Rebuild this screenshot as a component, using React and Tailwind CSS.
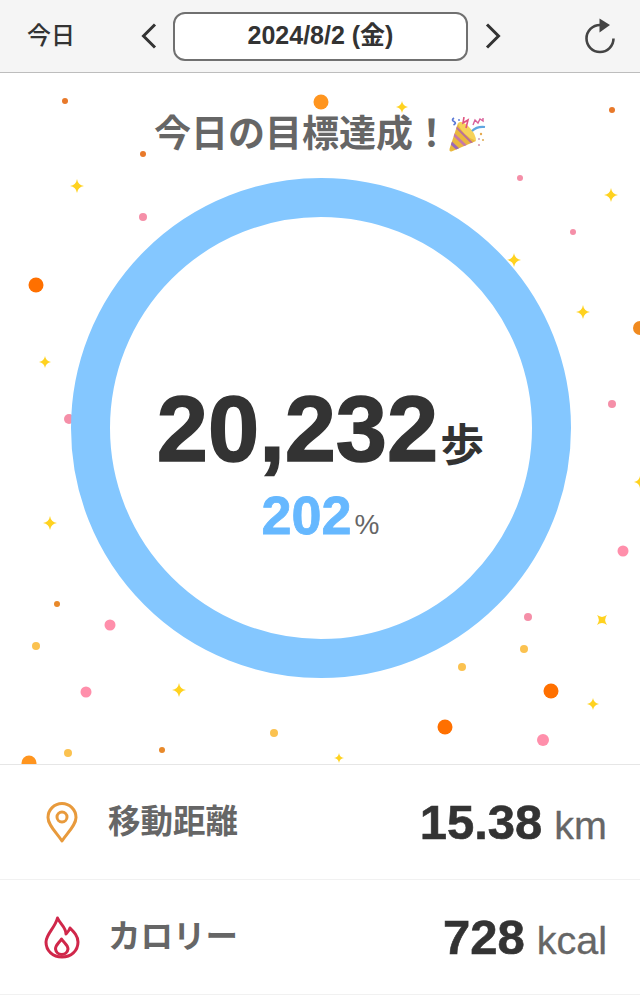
const DOTS = [
  [65,101,3,'#e8792a'],[143,154,3,'#e8792a'],[612,110,3,'#e8792a'],[321,102,7.5,'#ff951f'],
  [36,285,7.5,'#ff7000'],[520,178,3,'#f58fa8'],[573,232,3,'#f58fa8'],[143,217,4,'#f58fa8'],
  [69,419,5,'#f58fa8'],[640,328,7,'#f08a1f'],[612,404,4,'#f58fa8'],[623,551,5.5,'#ff8fab'],
  [57,604,3,'#e8892a'],[110,625,5.5,'#ff8fab'],[36,646,4,'#fbc250'],[86,692,5.5,'#ff8fab'],
  [29,763,7.5,'#ff951f'],[68,753,4,'#fbc250'],[162,750,3,'#e8892a'],[274,733,4,'#fbc250'],
  [528,617,4,'#f58fa8'],[524,649,4,'#fbc250'],[462,667,4,'#fbc250'],[551,691,7.5,'#ff7000'],
  [445,727,7.5,'#ff7000'],[543,740,6,'#ff8fab'],
];
const STARS = [
  [402,107,6],[77,186,7],[45,362,6],[50,523,7],[611,195,7],[514,260,7],[583,312,7],
  [640,482,6],[179,690,7],[593,704,6],[339,758,5],
];

function Star({ x, y, s, rotate }) {
  const k = s * 0.13;
  return (
    <path
      transform={`translate(${x} ${y})${rotate ? ' rotate(45)' : ''}`}
      d={`M0 ${-s} Q${k} ${-k} ${s} 0 Q${k} ${k} 0 ${s} Q${-k} ${k} ${-s} 0 Q${-k} ${-k} 0 ${-s}Z`}
      fill="#ffd21f"
    />
  );
}

function Confetti() {
  return (
    <svg className="absolute left-0 top-0 w-[640px] h-[692px]" viewBox="0 73 640 692">
      {DOTS.map(([x, y, r, c], i) => <circle key={i} cx={x} cy={y} r={r} fill={c} />)}
      {STARS.map(([x, y, s], i) => <Star key={i} x={x} y={y} s={s} />)}
      <Star x={602} y={620} s={7} rotate />
    </svg>
  );
}

function Popper() {
  return (
    <svg className="w-[38px] h-[35px] -ml-[2px] mt-[1px]" viewBox="0 0 38 35" fill="none">
      <defs>
        <clipPath id="cone">
          <path d="M10 6 L28 24 L3.5 34.5 Q1 35 1.5 32 Z" />
        </clipPath>
      </defs>
      <g clipPath="url(#cone)">
        <rect width="38" height="35" fill="#eab83e" />
        <path d="M-1 22 L14 36" stroke="#9a68b8" strokeWidth="3" />
        <path d="M2 14 L22 33" stroke="#c678a8" strokeWidth="2.6" />
        <path d="M5 7 L27 29" stroke="#b9719a" strokeWidth="2" />
      </g>
      <path d="M10 6 Q14 3 21 10 Q28 17 28 24 Q22 22 17 17 Q11 11 10 6Z" fill="#f6d25a" />
      <path d="M6 1 Q3 3 6 4.5 Q9 6 5.5 8" stroke="#5a78d6" strokeWidth="1.7" />
      <path d="M16 0 L15 6 L20 3 L18 11" stroke="#e0537f" strokeWidth="1.6" />
      <path d="M25 8 L27 3 L30 6 L32 2 L35 4 L35 1" stroke="#d9609a" strokeWidth="1.4" />
      <path d="M24 14 Q29 9 37 10" stroke="#5fa6e0" strokeWidth="2.2" />
      <circle cx="33" cy="17" r="1.2" fill="#e5a94f" />
      <circle cx="31" cy="22" r="1" fill="#c8a0c0" />
      <circle cx="35" cy="23" r="1.1" fill="#e0b060" />
      <circle cx="31" cy="28" r="1.1" fill="#d89ab0" />
      <circle cx="11" cy="3" r="0.9" fill="#5a78d6" />
    </svg>
  );
}

function Row({ icon, label, value, unit }) {
  return (
    <div className="h-[115px] flex items-center border-b border-[#f1f1f1] pl-[44px] pr-[33px]">
      <div className="w-[36px] flex justify-center">{icon}</div>
      <span className="ml-[28px] text-[32.5px] leading-none font-bold text-[#666666]">{label}</span>
      <span className="ml-auto flex items-baseline pt-[1px]">
        <span className="text-[49px] leading-none font-bold text-[#333333] [-webkit-text-stroke:0.6px_#333333]">{value}</span>
        <span className="text-[39.5px] ml-[12px] leading-none text-[#666666] [-webkit-text-stroke:0.3px_#666666]">{unit}</span>
      </span>
    </div>
  );
}

export default function App() {
  return (
    <div className="w-[640px] h-[1000px] bg-white overflow-hidden font-['Liberation_Sans','Noto_Sans_CJK_JP',sans-serif]">
      <header className="h-[73px] bg-[#f5f5f5] border-b border-[#bdbdbd] flex items-center">
        <span className="ml-[27px] w-[48px] text-[24px] leading-none font-medium text-[#333333]">今日</span>
        <svg className="ml-[66px] w-[16px] h-[26px]" viewBox="0 0 16 26" fill="none">
          <path d="M14 1.5 L2.5 13 L14 24.5" stroke="#333333" strokeWidth="3" />
        </svg>
        <div className="ml-[16px] w-[295px] h-[49px] bg-white border-2 border-[#707070] rounded-[12px] flex items-center justify-center text-[25px] font-bold text-[#333333]">
          2024/8/2 (金)
        </div>
        <svg className="ml-[17px] w-[16px] h-[26px]" viewBox="0 0 16 26" fill="none">
          <path d="M2 1.5 L13.5 13 L2 24.5" stroke="#333333" strokeWidth="3" />
        </svg>
        <svg className="ml-auto mr-[24px] w-[32px] h-[36px]" viewBox="0 0 32 36" fill="none">
          <path d="M16 7 A13.5 13.5 0 1 0 29.5 20.5" stroke="#444444" strokeWidth="2.6" />
          <path d="M15.5 0.5 L26 7 L15.5 14.5 Z" fill="#444444" />
        </svg>
      </header>

      <main className="relative h-[692px] border-b border-[#e6e6e6] overflow-hidden flex flex-col items-center">
        <Confetti />
        <div className="relative mt-[34px] h-[54px] flex items-center text-[37px] leading-none font-bold text-[#666666]">
          <span>今日の目標達成！</span>
          <Popper />
        </div>
        <div className="relative mt-[17px] ml-[1px] w-[500px] h-[500px] rounded-full border-[39px] border-[#84c7ff] bg-white flex flex-col items-center justify-center pt-[69px]">
          <div className="flex items-baseline">
            <span className="text-[92px] leading-none font-bold text-[#333333] [-webkit-text-stroke:1.5px_#333333]">20,232</span>
            <span className="text-[44px] leading-none font-bold text-[#333333] ml-[2px]">歩</span>
          </div>
          <div className="flex items-baseline mt-[13px]">
            <span className="text-[54px] leading-none font-bold text-[#66b8ff] [-webkit-text-stroke:0.8px_#66b8ff]">202</span>
            <span className="text-[28px] leading-none text-[#666666] ml-[3px]">%</span>
          </div>
        </div>
      </main>

      <Row
        label="移動距離"
        value="15.38"
        unit="km"
        icon={
          <svg className="w-[32px] h-[41px]" viewBox="0 0 32 41" fill="none" stroke="#e89a3c" strokeWidth="3">
            <path d="M16 39 C10 30 2 23 2 15.5 A14 14 0 0 1 30 15.5 C30 23 22 30 16 39 Z" strokeLinejoin="round" />
            <circle cx="16" cy="15" r="5" />
          </svg>
        }
      />
      <Row
        label="カロリー"
        value="728"
        unit="kcal"
        icon={
          <svg className="w-[36px] h-[43px]" viewBox="0 0 36 43" fill="none" stroke="#d0274a" strokeWidth="3" strokeLinejoin="round">
            <path d="M13.5 2 C16 8 22 11 22 18 C24 16 25.5 14 26 12 C30 16 34 20 34 26 C34 35 27 41 18 41 C9 41 2 35 2 26 C2 18 11 12 13.5 2 Z" />
            <path d="M17.5 23 C20 27 24 29 24 33 A6.3 6.3 0 0 1 11.5 33 C11.5 29 15 27 17.5 23 Z" />
          </svg>
        }
      />
    </div>
  );
}
